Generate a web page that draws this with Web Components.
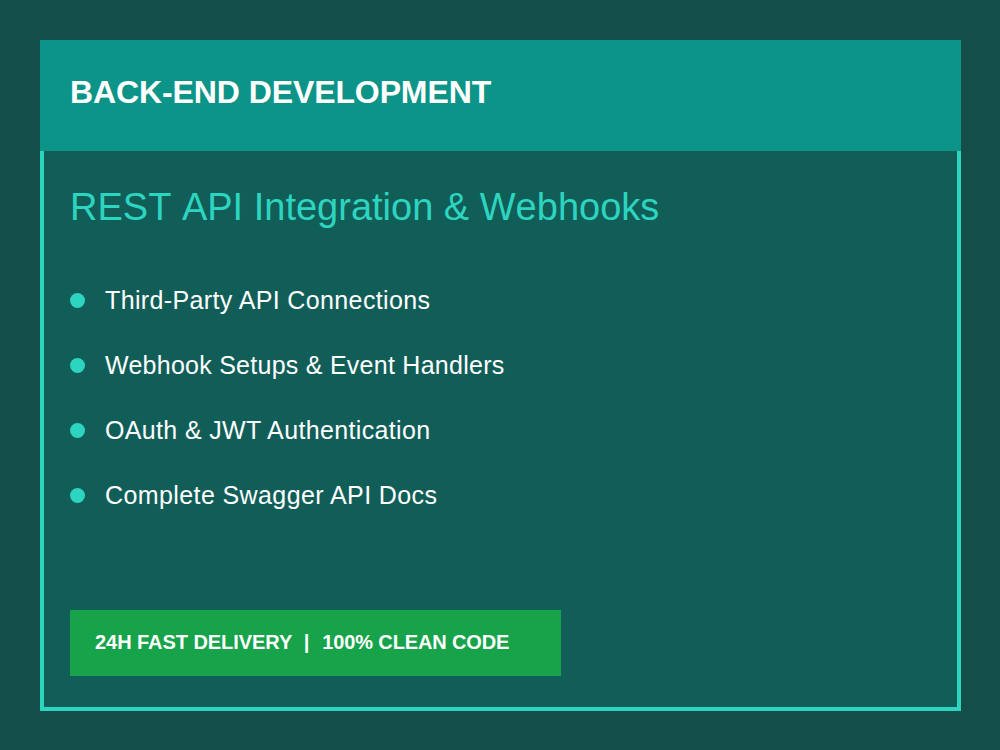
<!DOCTYPE html>
<html><head><meta charset="utf-8"><style>
html,body{margin:0;padding:0;background:#134e4a;}
body{width:1000px;height:750px;overflow:hidden;font-family:"Liberation Sans",Arial,sans-serif;}
</style></head><body>
<promo-card>
<span slot="header">BACK-END DEVELOPMENT</span>
<span slot="title">REST API Integration &amp; Webhooks</span>
<bullet-item style="letter-spacing:.37px">Third-Party API Connections</bullet-item>
<bullet-item style="letter-spacing:.26px">Webhook Setups &amp; Event Handlers</bullet-item>
<bullet-item style="letter-spacing:.35px">OAuth &amp; JWT Authentication</bullet-item>
<bullet-item style="letter-spacing:.4px">Complete Swagger API Docs</bullet-item>
<span slot="badge"><span style="letter-spacing:-.06px">24H FAST DELIVERY</span><span style="margin:0 13px 0 11.5px">|</span><span style="letter-spacing:-.13px">100% CLEAN CODE</span></span>
</promo-card>
<script>
class PromoCard extends HTMLElement{constructor(){super();this.attachShadow({mode:'open'}).innerHTML=`<style>
:host{display:flex;flex-direction:column;box-sizing:border-box;width:921px;height:671px;margin:40px 0 0 40px;background:#115e59;border:4px solid #2dd4bf;border-top:0;color:#fff}
.h{margin:0 -4px;height:111px;box-sizing:border-box;padding:0 0 6px 30px;background:#0d9488;display:flex;align-items:center;font-size:32px;font-weight:700;flex:none;letter-spacing:-.1px}
.b{flex:1;display:flex;flex-direction:column;padding:0 26px 31px}
.t{font-size:38px;color:#2dd4bf;margin-top:34px;line-height:44px;letter-spacing:0;font-kerning:none}
.l{display:flex;flex-direction:column;gap:30px;margin-top:54px}
.bd{margin-top:auto;width:491px;height:66px;box-sizing:border-box;background:#16a34a;display:flex;align-items:center;padding:0 0 2px 25px;font-size:20px;font-weight:700}
</style><div class="h"><slot name="header"></slot></div><div class="b"><div class="t"><slot name="title"></slot></div><div class="l"><slot></slot></div><div class="bd"><slot name="badge"></slot></div></div>`}}
class BulletItem extends HTMLElement{constructor(){super();this.attachShadow({mode:'open'}).innerHTML=`<style>
:host{display:flex;align-items:center;gap:20px;font-size:25px;line-height:35px;color:#fff;letter-spacing:.35px}
i{width:15px;height:15px;border-radius:50%;background:#2dd4bf;flex:none}
</style><i></i><span><slot></slot></span>`}}
customElements.define('promo-card',PromoCard);customElements.define('bullet-item',BulletItem);
</script>
</body></html>
